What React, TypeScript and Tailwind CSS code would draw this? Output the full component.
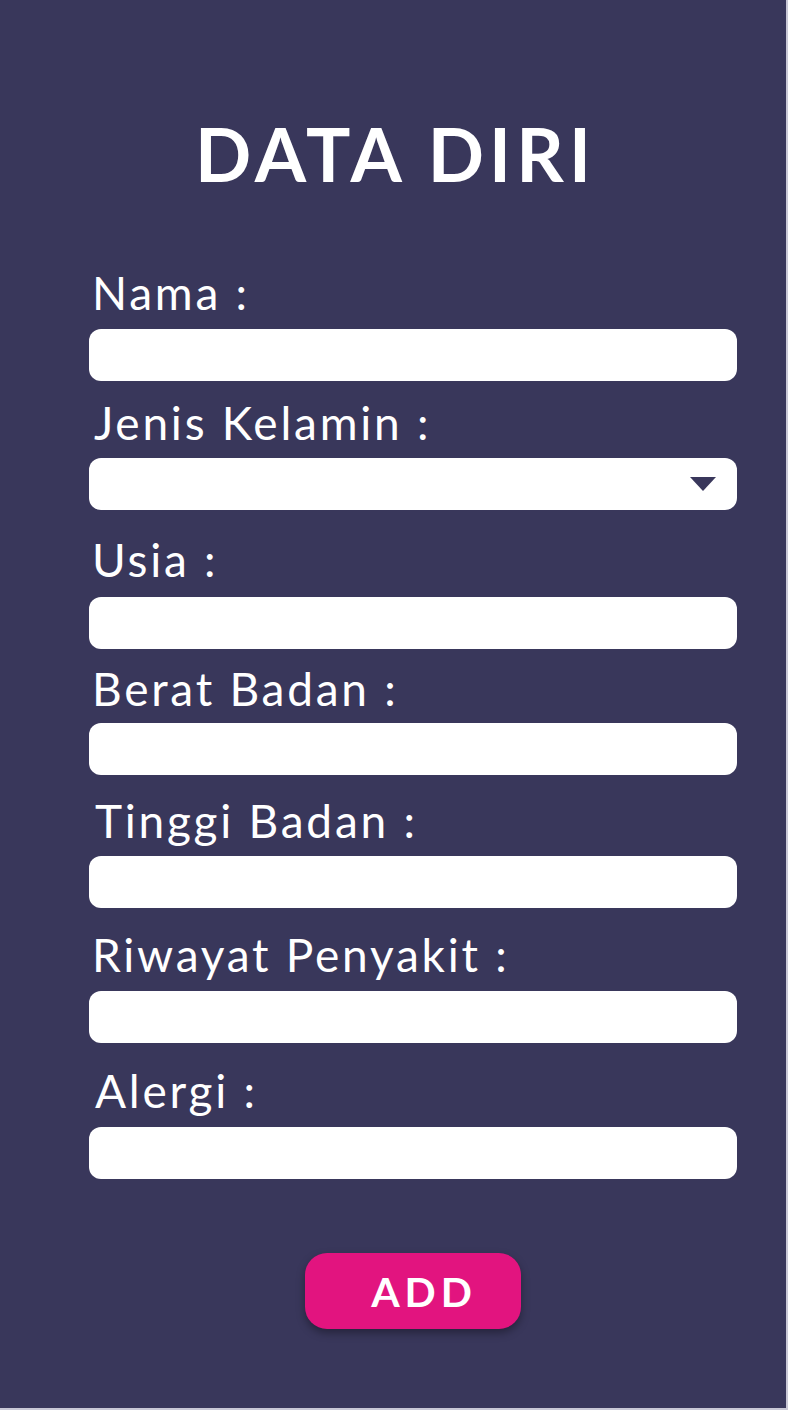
import React from 'react'

type Field = { label: string; labelMt: string; inputMt: string; indent: string; select?: boolean }

const FIELDS: Field[] = [
  { label: 'Nama :', labelMt: 'mt-[79px]', inputMt: 'mt-[13px]', indent: 'pl-[3px]' },
  { label: 'Jenis Kelamin :', labelMt: 'mt-[19px]', inputMt: 'mt-[12px]', indent: 'pl-[5px]', select: true },
  { label: 'Usia :', labelMt: 'mt-[27px]', inputMt: 'mt-[14px]', indent: 'pl-[3px]' },
  { label: 'Berat Badan :', labelMt: 'mt-[17px]', inputMt: 'mt-[11px]', indent: 'pl-[3px]' },
  { label: 'Tinggi Badan :', labelMt: 'mt-[23px]', inputMt: 'mt-[12px]', indent: 'pl-[6px]' },
  { label: 'Riwayat Penyakit :', labelMt: 'mt-[24px]', inputMt: 'mt-[13px]', indent: 'pl-[3px]' },
  { label: 'Alergi :', labelMt: 'mt-[25px]', inputMt: 'mt-[13px]', indent: 'pl-[6px]' },
]

export default function App() {
  return (
    <div className="w-[788px] h-[1410px] bg-[#c9c8d6]" style={{ fontFamily: 'Lato, "Open Sans", sans-serif' }}>
      <div className="w-[786px] h-[1408px] bg-[#39375b] flex flex-col pl-[89px] pr-[49px]">
        {/* Title */}
        <h1 className="mt-[117px] text-center text-white font-bold text-[74px] leading-none tracking-[0.07em] pr-[35px]">
          DATA DIRI
        </h1>

        {/* Form */}
        {FIELDS.map((f) => (
          <div key={f.label} className="flex flex-col">
            <label className={`${f.labelMt} ${f.indent} text-white text-[46px] leading-[46px] tracking-[0.06em]`}>
              {f.label}
            </label>
            <div className={`${f.inputMt} relative h-[52px] w-full rounded-[12px] bg-white`}>
              {f.select && (
                <svg
                  className="absolute right-[21px] top-[19px]"
                  width="26"
                  height="14"
                  viewBox="0 0 26 14"
                >
                  <path d="M0 0 H26 L13 14 Z" fill="#39375b" />
                </svg>
              )}
            </div>
          </div>
        ))}

        {/* Button */}
        <div className="mt-[74px] flex justify-center">
          <button className="w-[216px] h-[76px] rounded-[22px] bg-[#e2147f] text-white font-bold text-[41px] leading-none tracking-[0.12em] pl-[22px] shadow-[0_4px_8px_rgba(0,0,0,0.35)]">
            ADD
          </button>
        </div>
      </div>
    </div>
  )
}
